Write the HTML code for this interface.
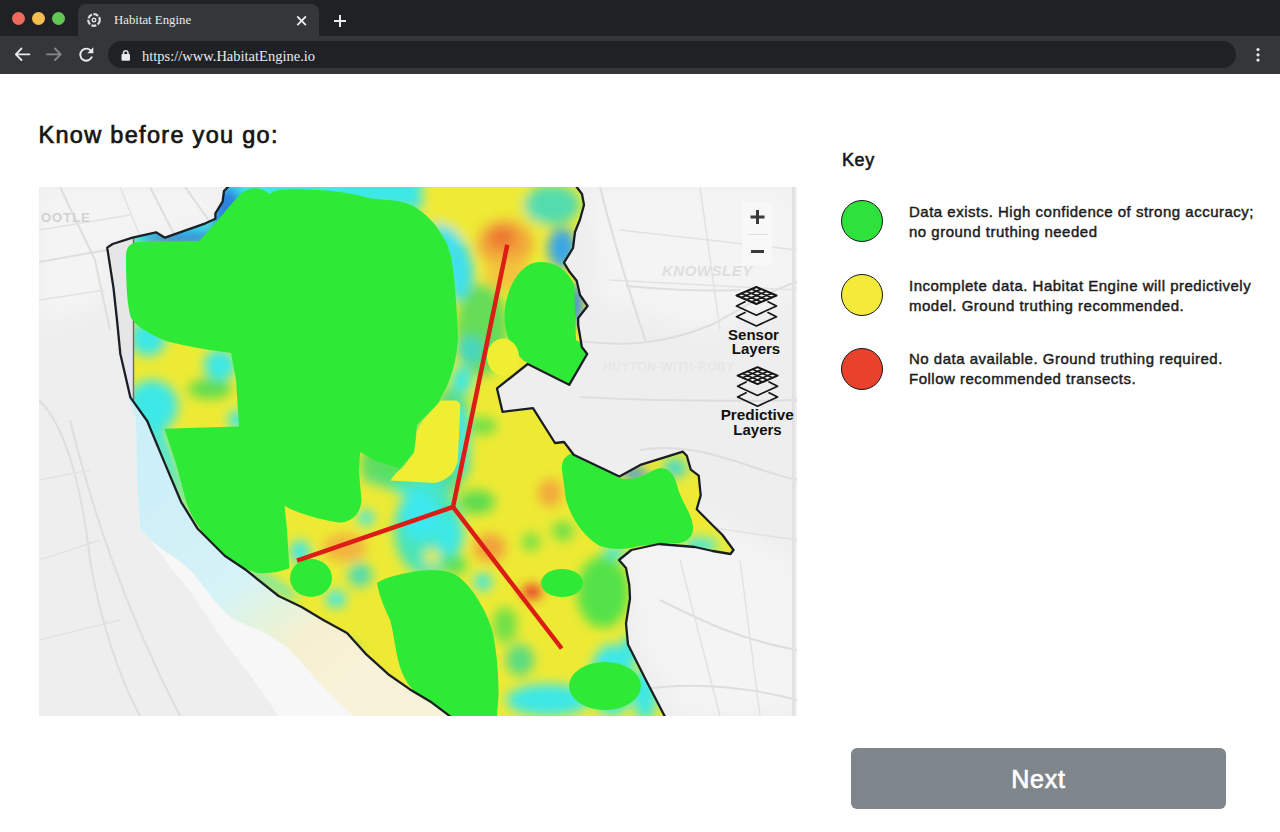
<!DOCTYPE html>
<html><head><meta charset="utf-8">
<style>
*{margin:0;padding:0;box-sizing:border-box}
html,body{width:1280px;height:832px;overflow:hidden;background:#fff;font-family:"Liberation Sans",sans-serif}
.abs{position:absolute}
#tabbar{position:absolute;left:0;top:0;width:1280px;height:37px;background:#202124}
#tab{position:absolute;left:78px;top:4px;width:241px;height:33px;background:#35363a;border-radius:8px 8px 0 0}
#toolbar{position:absolute;left:0;top:36px;width:1280px;height:38px;background:#35363a}
#omni{position:absolute;left:108px;top:41px;width:1128px;height:27px;background:#202124;border-radius:13.5px}
.dot{position:absolute;top:12px;width:13px;height:13px;border-radius:50%}
.serif{font-family:"Liberation Serif",serif}
h1{position:absolute;left:38.5px;top:120.3px;font-size:23.5px;line-height:30px;letter-spacing:1.3px;-webkit-text-stroke:0.7px #151515;color:#151515;font-weight:normal;white-space:nowrap}
#map{position:absolute;left:39px;top:187px;width:758px;height:529px;overflow:hidden}
.keyt{position:absolute;left:842px;top:149px;font-size:18px;line-height:22px;letter-spacing:0.6px;-webkit-text-stroke:0.55px #151515;color:#151515}
.kc{position:absolute;left:841px;width:42px;height:42px;border-radius:50%;border:1.5px solid #1a1a1a}
.kt{position:absolute;left:909px;font-size:15px;line-height:20px;letter-spacing:0.5px;-webkit-text-stroke:0.45px #1c1c1c;color:#1c1c1c;white-space:nowrap}
#next{position:absolute;left:851px;top:748px;width:375px;height:61px;background:#7f868b;border-radius:6px;color:#fff;font-size:25px;letter-spacing:0.8px;-webkit-text-stroke:0.7px #fff;text-align:center;line-height:63px;overflow:hidden}
</style></head><body>
<div id="tabbar"></div>
<div class="dot" style="left:12px;background:#ee6a5f"></div>
<div class="dot" style="left:32px;background:#f5be4f"></div>
<div class="dot" style="left:52px;background:#62c655"></div>
<div id="tab"></div>
<div class="abs serif" style="left:114px;top:13px;font-size:12.8px;color:#e8eaed">Habitat Engine</div>
<div id="toolbar"></div>
<div id="omni"></div>
<div class="abs serif" style="left:142px;top:47.5px;font-size:14.5px;color:#e8eaed">https://www.HabitatEngine.io</div>
<svg class="abs" style="left:0;top:0" width="1280" height="74" viewBox="0 0 1280 74">
<g fill="none" stroke="#dcdcdc">
<circle cx="94" cy="20" r="5.8" stroke-width="2.2" stroke-dasharray="5 1.5"/>
<circle cx="94" cy="20" r="1.8" stroke-width="1.4"/>
</g>
<g stroke="#e8eaed" stroke-width="1.8" stroke-linecap="round">
<line x1="297.8" y1="17" x2="305.4" y2="24.6"/><line x1="305.4" y1="17" x2="297.8" y2="24.6"/>
</g>
<g stroke="#e8eaed" stroke-width="2">
<line x1="334" y1="21" x2="346" y2="21"/><line x1="340" y1="15" x2="340" y2="27"/>
</g>
<g fill="none" stroke="#e8eaed" stroke-width="1.8" stroke-linecap="round" stroke-linejoin="round">
<path d="M29.5,54.3 H16 M21.5,48.5 L15.8,54.3 L21.5,60"/>
</g>
<g fill="none" stroke="#86878a" stroke-width="1.8" stroke-linecap="round" stroke-linejoin="round">
<path d="M47,54.3 H60.5 M55,48.5 L60.7,54.3 L55,60"/>
</g>
<path d="M91.2,51.2 A6,6 0 1 0 92,56.5" fill="none" stroke="#e8eaed" stroke-width="1.9"/>
<path d="M93.3,47.2 L93.3,53.2 L87.3,53.2 Z" fill="#e8eaed"/>
<rect x="121.5" y="54" width="8.5" height="6.8" rx="1" fill="#e8eaed"/>
<path d="M123.5,54.5 V52.5 A2.3,2.3 0 0 1 128,52.5 V54.5" fill="none" stroke="#e8eaed" stroke-width="1.5"/>
<g fill="#e8eaed"><circle cx="1258" cy="49.5" r="1.6"/><circle cx="1258" cy="54.8" r="1.6"/><circle cx="1258" cy="60.1" r="1.6"/></g>
</svg>

<h1>Know before you go:</h1>
<svg id="map" width="758" height="529" viewBox="39 187 758 529">
<defs>
<clipPath id="bd"><path id="bdp" d="M228,175 L228,187 L224,191 L222.6,201.6 L215.4,213.4 L215.4,218.8 L205.5,223.3 L165,237.7 L156,232.3 L132.5,237.7 L112.6,244 L107.2,247.6 L113.5,288 L117,320 L120.3,353.7 L130.4,397.4 L147.2,421 L164,461.4 L181,501.8 L197.7,528.8 L224.7,555.7 L244.9,569.2 L278.6,596 L301.6,607 L323.3,620 L347,633 L366.6,654.7 L388.2,674.2 L410,689.4 L431.5,702.3 L448.8,715.3 L462,726 L672,726 L664.6,716 L645.4,679 L628,644.6 L626,623.5 L630,598.5 L629.3,585 L626,568 L619,560 L631.3,550 L659,544 L694.8,547 L712.6,551 L730.5,554 L733.5,550 L722.5,535 L710.6,523.2 L696.7,509.3 L700.7,495.4 L698.7,475.6 L690.8,469.6 L686.8,455.7 L682.9,451.7 L641.2,464.6 L619.4,476.5 L573.7,454.7 L564,442 L555,443 L533,408.2 L502.5,411.8 L497,388.4 L527.7,364 L569.2,384.8 L587.2,354 L581.8,346.9 L580,336 L578.2,325.2 L578.2,318 L587.6,306 L580,295 L576.7,280.8 L569.5,271.8 L564,262.7 L573,248 L575,232 L580,219.5 L584,205 L582,194 L576.7,187 L576,175 Z"/></clipPath>
<filter id="b6" x="-50%" y="-50%" width="200%" height="200%"><feGaussianBlur stdDeviation="6"/></filter>
<filter id="b10" x="-50%" y="-50%" width="200%" height="200%"><feGaussianBlur stdDeviation="10"/></filter>
<filter id="b3" x="-50%" y="-50%" width="200%" height="200%"><feGaussianBlur stdDeviation="3"/></filter>
<linearGradient id="riv" x1="160" y1="470" x2="330" y2="690" gradientUnits="userSpaceOnUse">
<stop offset="0" stop-color="#cdeff8"/><stop offset="0.5" stop-color="#d6f3f6"/><stop offset="0.66" stop-color="#e4f4dc"/><stop offset="0.8" stop-color="#f6efd0"/><stop offset="1" stop-color="#f8f2d8"/>
</linearGradient>
</defs>
<!-- base map -->
<rect x="39" y="187" width="758" height="529" fill="#eeeeee"/>
<g fill="#f4f4f4" filter="url(#b10)">
<path d="M39,187 L230,187 L222,205 L205,222 L110,245 L108,300 L60,320 L39,320 Z"/>
<path d="M590,187 L797,187 L797,300 L700,330 L600,300 Z"/>
<path d="M600,470 L797,560 L797,716 L680,716 L640,640 L630,570 Z"/>
</g>
<g fill="none" stroke="#dedede" stroke-width="2">
<path d="M39,262 L220,230"/>
<path d="M60,187 L95,260 L110,330"/>
<path d="M150,187 L175,236"/>
<path d="M185,187 L210,222"/>
<path d="M39,400 C60,420 80,470 90,560 C100,620 120,680 140,716"/>
<path d="M70,420 C90,500 120,600 180,716"/>
<path d="M600,187 C612,236 626,279 636,312 C640,325 644,335 646,342"/>
<path d="M580,341 C620,346 660,346 711,325 C740,310 770,290 797,282"/>
<path d="M580,397 C640,400 720,402 797,400"/>
<path d="M626,286 C660,289 700,292 740,290"/>
<path d="M640,450 C700,440 750,470 797,480"/>
<path d="M660,600 C700,620 740,640 797,650"/>
<path d="M640,690 C700,680 760,690 797,700"/>
</g>
<g fill="none" stroke="#e2e2e2" stroke-width="1.5">
<path d="M39,230 L130,215 M39,300 L105,290 M120,187 L140,236 M39,480 L90,470 M39,560 L100,540 M39,640 L120,620"/>
<path d="M620,230 L797,250 M610,280 L797,290 M700,187 L720,330 M660,520 L797,540 M680,560 L720,716 M740,560 L760,716"/>
</g>
<rect x="792" y="187" width="3" height="529" fill="#e2e2e2"/>
<text x="41" y="222" font-family="Liberation Sans, sans-serif" font-size="13" font-weight="bold" fill="#d2d2d2" letter-spacing="1">OOTLE</text>
<text x="662" y="276" font-family="Liberation Sans, sans-serif" font-size="15" font-style="italic" font-weight="bold" fill="#dedede" letter-spacing="0.5">KNOWSLEY</text>
<text x="603" y="371" font-family="Liberation Sans, sans-serif" font-size="12" font-weight="bold" fill="#e7e7e7" letter-spacing="0.5">HUYTON-WITH-ROBY</text>
<!-- river -->
<path d="M126,380 L136,420 L137,480 L139,522 C150,540 165,560 176,574 C190,590 200,605 222,639 C235,655 255,680 278,716 L450,716 L448.8,715.3 L388.2,674.2 L347,633 L301.6,607 L244.9,569.2 L197.7,528.8 L164,461.4 L130.4,397.4 Z" fill="#f7f7f7"/>
<path d="M128,397 L136,420 L137,480 C138,500 139,515 140,528 C150,540 160,548 165,551 C180,560 190,570 194,574 C200,582 208,592 213,599 C220,607 228,615 233,619 C243,624 252,627 259,630 C268,635 280,642 287,647 C298,658 308,670 315.5,678.5 C325,690 336,700 344,707 L354,716 L450,716 L448.8,715.3 L431.5,702.3 L410,689.4 L388.2,674.2 L366.6,654.7 L347,633 L323.3,620 L301.6,607 L278.6,596 L244.9,569.2 L224.7,555.7 L197.7,528.8 L181,501.8 L164,461.4 L147.2,421 L130.4,397.4 Z" fill="url(#riv)"/>
<!-- heatmap -->
<g clip-path="url(#bd)">
<rect x="39" y="175" width="758" height="560" fill="#eeea34"/>
<g filter="url(#b6)">
<!-- top strip -->
<path d="M200,175 L422,175 L422,210 L380,208 L250,218 L130,252 L130,232 Z" fill="#3ce8e6"/>
<ellipse cx="228" cy="212" rx="16" ry="26" fill="#2f7fe0"/>
<ellipse cx="185" cy="238" rx="45" ry="8" fill="#3388e2"/>
<ellipse cx="300" cy="190" rx="60" ry="8" fill="#3ce8e6"/>
<!-- upper middle -->
<ellipse cx="492" cy="215" rx="60" ry="26" fill="#eeea34"/>
<ellipse cx="552" cy="205" rx="28" ry="20" fill="#52dcae"/>
<ellipse cx="562" cy="248" rx="14" ry="20" fill="#3aa6e6"/>
<ellipse cx="575" cy="305" rx="8" ry="22" fill="#3a8ce6"/>
<path d="M430,222 L452,228 L468,248 L474,270 L470,300 L452,300 L443,260 Z" fill="#3ce0ee"/>
<ellipse cx="482" cy="330" rx="26" ry="46" fill="#66dc58"/>
<ellipse cx="470" cy="350" rx="14" ry="14" fill="#44d6c0"/>
<ellipse cx="462" cy="380" rx="10" ry="14" fill="#3ce8e6"/>
<!-- left strip -->
<ellipse cx="148" cy="338" rx="18" ry="18" fill="#3ce8e6"/>
<ellipse cx="220" cy="365" rx="16" ry="16" fill="#3ce8e6"/>
<ellipse cx="210" cy="389" rx="22" ry="10" fill="#5edc50"/>
<ellipse cx="152" cy="406" rx="26" ry="26" fill="#3ce8e6"/>
<ellipse cx="238" cy="420" rx="10" ry="10" fill="#3ce8e6"/>
<path d="M140,420 L165,470 L185,510 L220,552 L260,580 L300,605 L290,590 L250,565 L215,540 L190,505 L175,460 L160,420 Z" fill="#3ce8e6"/>
<!-- around yellow patch -->
<path d="M362,452 L420,425 L448,385 L468,400 L470,470 L455,492 L400,492 L362,480 Z" fill="#56dc86"/>
<ellipse cx="460" cy="440" rx="8" ry="36" fill="#3ce8e6"/>
<ellipse cx="420" cy="487" rx="28" ry="8" fill="#3ce8e6"/>
<ellipse cx="372" cy="462" rx="12" ry="16" fill="#62dc60"/>
<!-- junction -->
<ellipse cx="428" cy="530" rx="34" ry="46" fill="#48e4b8"/><ellipse cx="420" cy="515" rx="20" ry="26" fill="#3ce8ee"/><ellipse cx="450" cy="535" rx="14" ry="20" fill="#3ce8e6"/><ellipse cx="402" cy="470" rx="22" ry="14" fill="#56e25a"/><ellipse cx="455" cy="565" rx="12" ry="10" fill="#5ae05a"/>
<ellipse cx="432" cy="557" rx="8" ry="8" fill="#eeea34"/>
<ellipse cx="477" cy="502" rx="18" ry="12" fill="#5cdc50"/>
<ellipse cx="366" cy="518" rx="8" ry="8" fill="#3ce8e6"/>
<ellipse cx="483" cy="582" rx="9" ry="9" fill="#3ce8e6"/>
<ellipse cx="300" cy="552" rx="10" ry="12" fill="#3ce8e6"/>
<ellipse cx="336" cy="599" rx="10" ry="9" fill="#3ce8e6"/>
<ellipse cx="360" cy="575" rx="12" ry="12" fill="#50dcb0"/>
<ellipse cx="345" cy="650" rx="14" ry="8" fill="#6cdc80"/>
<!-- right middle -->
<ellipse cx="483" cy="426" rx="14" ry="9" fill="#6ee04a"/>
<ellipse cx="531" cy="542" rx="9" ry="9" fill="#6ee04a"/>
<ellipse cx="563" cy="531" rx="11" ry="10" fill="#6ee04a"/>
<ellipse cx="603" cy="592" rx="26" ry="36" fill="#52e24a"/>
<ellipse cx="505" cy="625" rx="12" ry="18" fill="#6ee04a"/>
<ellipse cx="615" cy="552" rx="12" ry="6" fill="#3ce8e6"/>
<ellipse cx="675" cy="468" rx="12" ry="10" fill="#4ad8c8"/>
<ellipse cx="635" cy="474" rx="14" ry="6" fill="#3a90e6"/>
<ellipse cx="700" cy="545" rx="18" ry="7" fill="#3ce8e6"/>
<!-- bottom -->
<ellipse cx="612" cy="680" rx="22" ry="36" fill="#3ce8e6"/><ellipse cx="645" cy="695" rx="12" ry="26" fill="#3ce8e6"/><ellipse cx="632" cy="648" rx="10" ry="14" fill="#3ce8e6"/>
<ellipse cx="548" cy="700" rx="42" ry="16" fill="#3ce8e6"/>
<ellipse cx="520" cy="660" rx="14" ry="16" fill="#5cdc80"/>
<!-- orange / red -->
<ellipse cx="505" cy="243" rx="28" ry="24" fill="#f2a83a"/><ellipse cx="502" cy="238" rx="14" ry="12" fill="#ee7a30"/>
<ellipse cx="508" cy="275" rx="22" ry="16" fill="#f2c43c"/>
<ellipse cx="550" cy="493" rx="12" ry="14" fill="#f2a83c"/>
<ellipse cx="490" cy="548" rx="16" ry="14" fill="#f2a03c"/>
<ellipse cx="345" cy="548" rx="22" ry="14" fill="#f2b440"/>
<ellipse cx="532" cy="592" rx="10" ry="7" fill="#e8282a"/>
</g>
<!-- docks strip -->
<path d="M100,240 L134,236 L134,400 L128,400 L118,340 L110,280 Z" fill="#e6e6e6"/>
<line x1="133.5" y1="238" x2="133.5" y2="400" stroke="#6a6a6a" stroke-width="1.4"/>
<!-- green blobs -->
<g fill="#2eea36">
<path d="M126,256 Q126,242 140,242 L199,241 C215,225 230,204 242,192.7 Q249,188 257,188.4 Q264,189 269.6,194 Q276,189 284,189.5 C300,189 310,190 326.6,190.5 C345,192 358,195 368.8,198 C382,200 393,200 400.4,201.5 C410,204 416,207 421.5,211.6 C428,217 432,221 436.3,226.4 C441,233 444,238 446.8,243.3 C450,252 452,260 453,268.6 C455,285 457,310 458,338 C457,360 451,378 446,388 L437.6,404 L417,425 L414,452 L400,468 L378,462 L360,452 L359,472 L361.5,501 C360,512 355,520 342,522.6 C330,522 300,515 284.6,505.8 L287,530 L289.4,568.3 C280,572 268,574 258,573 C245,570 225,558 212.5,544 C200,530 190,515 186,501 L176.4,465 L164.4,428.8 L239,426.4 L236,380 L231,353 C215,351 185,346 167.7,341.5 C150,335 135,325 131,318 C127,305 126,285 126,256 Z"/>
<path d="M540,262 C556,262 568,270 574,285 L576,340 L592,350 L592,395 L524,361 C512,350 504,335 504.5,315 C505,290 520,262 540,262 Z"/>
<path d="M562,470 C560,458 570,452 580,452 L619,478 C630,481 645,476 651,471.6 C660,466 672,466 677,485 C682,505 694,515 693,530 C692,540 682,545 670,543 L640,546 C625,550 612,550 600,546 C585,538 572,520 566,500 Z"/>
<ellipse cx="562" cy="583" rx="21" ry="14"/>
<ellipse cx="605" cy="686" rx="36" ry="24"/>
<ellipse cx="311" cy="578" rx="21" ry="19"/>
<path d="M377,583 C385,577 410,571 431.5,570 C445,570 455,573 460,578 C475,590 488,615 492,630 C497,650 499,680 498.6,695 L497,716 L440,716 L414,691 C405,682 400,670 397,655 C394,640 393,630 390,620 C386,610 380,600 377,583 Z"/>
</g>
<g fill="#f0ee32">
<ellipse cx="503" cy="357" rx="16" ry="18.5"/>
<path d="M441,400.4 L456,400.4 Q460.4,402 460.4,407 L457.8,461 Q455,472 449.4,476 Q442,482 434.3,483 L390.5,480.4 Q396,472 402.3,467.7 L414,452.6 Q416,440 416.6,430.7 L424,419 Z"/>
</g>
</g>
<!-- boundary -->
<use href="#bdp" fill="none" stroke="#1a1f26" stroke-width="2.3" stroke-linejoin="round"/>
<!-- red transects -->
<g stroke="#dc1c16" stroke-width="4.5" fill="none" stroke-linecap="butt" stroke-linejoin="miter">
<path d="M507.3,244.7 L453,507 L297,560.6"/>
<path d="M453,507 L561.7,648.5"/>
</g>
<!-- zoom control -->
<rect x="742" y="203" width="30" height="62" fill="#f8f8f8"/>
<line x1="748" y1="234.5" x2="768" y2="234.5" stroke="#dedede" stroke-width="1"/>
<g stroke="#3a3a3a" stroke-width="3">
<line x1="750.5" y1="217" x2="764.5" y2="217"/><line x1="757.5" y1="210" x2="757.5" y2="224"/>
<line x1="751" y1="251.5" x2="764" y2="251.5"/>
</g>
<!-- layer icons -->
<g id="lay" fill="none" stroke="#161616" stroke-width="1.7" stroke-linejoin="round" stroke-linecap="round">
<path d="M745,301.8 L736.5,306 L756.4,315.2 L776.5,306 L768,301.8"/>
<path d="M745,312.6 L736.5,316.8 L756.4,326 L776.5,316.8 L768,312.6"/>
<path d="M756.4,287 L776.5,295.5 L756.4,304 L736.5,295.5 Z" fill="#f0f0f0" stroke-width="2"/>
<path d="M751.4,289.1 L771.5,297.6 M746.45,291.25 L766.45,299.75 M741.5,293.4 L761.4,301.9 M761.4,289.1 L741.5,297.6 M766.45,291.25 L746.45,299.75 M771.5,293.4 L751.4,301.9" stroke-width="1.6"/>
</g>
<use href="#lay" x="1.1" y="80.2"/>
<g font-family="Liberation Sans, sans-serif" font-weight="bold" font-size="15" fill="#111" text-anchor="middle">
<text x="753.5" y="339.8">Sensor</text>
<text x="756" y="354">Layers</text>
<text x="757.2" y="420.3" font-size="15.3">Predictive</text>
<text x="757.5" y="435">Layers</text>
</g>
</svg>


<div class="keyt">Key</div>
<div class="kc" style="top:200px;background:#2ee23b"></div>
<div class="kc" style="top:274px;background:#f3ea3a"></div>
<div class="kc" style="top:348px;background:#e8412c"></div>
<div class="kt" style="top:201.5px">Data exists. High confidence of strong accuracy;<br>no ground truthing needed</div>
<div class="kt" style="top:275.7px">Incomplete data. Habitat Engine will predictively<br>model. Ground truthing recommended.</div>
<div class="kt" style="top:349.3px">No data available. Ground truthing required.<br>Follow recommended transects.</div>
<div id="next">Next</div>
</body></html>
